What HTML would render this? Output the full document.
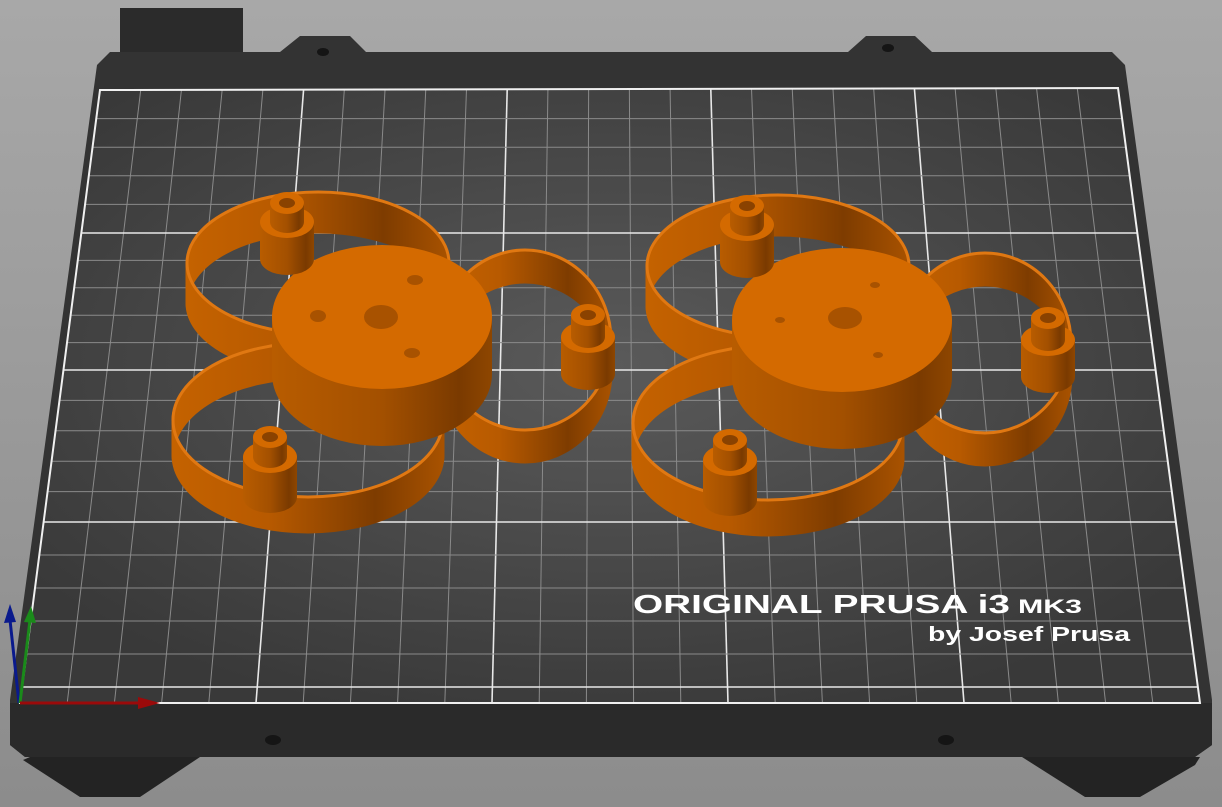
<!DOCTYPE html>
<html><head><meta charset="utf-8"><style>
html,body{margin:0;padding:0;width:1222px;height:807px;overflow:hidden;background:#999}
svg{display:block}
</style></head><body>
<svg id="s" width="1222" height="807" viewBox="0 0 1222 807" xmlns="http://www.w3.org/2000/svg">
<defs>
<linearGradient id="bg" x1="0" y1="0" x2="0" y2="1"><stop offset="0" stop-color="#a8a8a8"/><stop offset="1" stop-color="#8c8c8c"/></linearGradient>
<radialGradient id="gf" cx="0.5" cy="0.45" r="0.6"><stop offset="0" stop-color="#5a5a5a"/><stop offset="1" stop-color="#393939"/></radialGradient>
<linearGradient id="wall" x1="0" y1="0" x2="1" y2="0"><stop offset="0" stop-color="#c46200"/><stop offset="0.35" stop-color="#b85a00"/><stop offset="0.75" stop-color="#7e3c00"/><stop offset="1" stop-color="#a85200"/></linearGradient>
<linearGradient id="hubs" x1="0" y1="0" x2="1" y2="0"><stop offset="0" stop-color="#b85c00"/><stop offset="0.5" stop-color="#a35000"/><stop offset="0.85" stop-color="#7a3a00"/><stop offset="1" stop-color="#8e4600"/></linearGradient>
</defs>
<rect width="1222" height="807" fill="url(#bg)"/>
<rect x="120" y="8" width="123" height="50" fill="#2b2b2b"/>
<polygon points="30,757 200,757 140,797 80,797 23,760" fill="#232323"/>
<polygon points="1022,757 1200,757 1195,765 1140,797 1085,797" fill="#232323"/>
<polygon points="97,65 110,52 280,52 300,36 350,36 366,52 848,52 866,36 915,36 932,52 1112,52 1125,65 1212,700 1212,745 1195,757 25,757 10,745 10,700" fill="#333"/>
<polygon points="10,703 1212,703 1212,745 1195,757 25,757 10,745" fill="#2a2a2a"/>
<ellipse cx="273" cy="740" rx="8" ry="5" fill="#151515"/>
<ellipse cx="946" cy="740" rx="8" ry="5" fill="#151515"/>
<ellipse cx="323" cy="52" rx="6" ry="4" fill="#151515"/>
<ellipse cx="888" cy="48" rx="6" ry="4" fill="#151515"/>
<polygon points="100,90 1118,88 1200,703 20,703" fill="url(#gf)"/>
<g id="grid"></g>
<polygon points="100,90 1118,88 1200,703 20,703" fill="none" stroke="#f0f0f0" stroke-width="2"/>
<g id="obj1"></g>
<g id="obj2" transform="translate(460,3)"></g>
<text x="633" y="613" fill="#fff" font-family="Liberation Sans, sans-serif" font-size="26" font-weight="bold" textLength="377" lengthAdjust="spacingAndGlyphs">ORIGINAL PRUSA i3</text>
<text x="1018" y="613" fill="#fff" font-family="Liberation Sans, sans-serif" font-size="19" font-weight="bold" textLength="64" lengthAdjust="spacingAndGlyphs">MK3</text>
<text x="928" y="641" fill="#fff" font-family="Liberation Sans, sans-serif" font-size="20" font-weight="bold" textLength="202" lengthAdjust="spacingAndGlyphs">by Josef Prusa</text>
<line x1="19" y1="703" x2="10" y2="620" stroke="#0a1a8c" stroke-width="3"/>
<polygon points="4,623 10,604 16,622" fill="#0a1a8c"/>
<line x1="20" y1="703" x2="30" y2="620" stroke="#1a8a1a" stroke-width="3"/>
<polygon points="24,622 31,606 36,623" fill="#1a8a1a"/>
<line x1="20" y1="703" x2="140" y2="703" stroke="#9a0a0a" stroke-width="3"/>
<polygon points="138,697 160,703 138,709" fill="#9a0a0a"/>
</svg>
<script>
var NS="http://www.w3.org/2000/svg";
function el(p,n,a){var e=document.createElementNS(NS,n);for(var k in a)e.setAttribute(k,a[k]);p.appendChild(e);return e;}
var g=document.getElementById('grid');
var TL=[100,90],TR=[1118,88],BL=[20,703],BR=[1200,703];
for(var i=1;i<25;i++){var t=i/25;var x1=TL[0]+(TR[0]-TL[0])*t,y1=TL[1]+(TR[1]-TL[1])*t,x2=BL[0]+(BR[0]-BL[0])*t;
 el(g,'line',{x1:x1,y1:y1,x2:x2,y2:703,stroke:i%5?'#8a8a8a':'#e8e8e8','stroke-width':i%5?1:1.6});}
var maj=[90,233,370,522,687];var ys=[];
for(var m=0;m<4;m++)for(var k=0;k<5;k++)ys.push([maj[m]+(maj[m+1]-maj[m])*k/5,k==0]);
ys.push([687,true]);
ys.forEach(function(a,idx){if(idx==0)return;var y=a[0];var f=(y-90)/(703-90);var xl=100+(20-100)*f,xr=1118+(1200-1118)*f;
 el(g,'line',{x1:xl,y1:y,x2:xr,y2:y,stroke:a[1]?'#e8e8e8':'#8a8a8a','stroke-width':a[1]?1.6:1});});
function ring(p,cx,cy,rx,ry,h){for(var d=h;d>0;d-=2)el(p,'ellipse',{cx:cx,cy:cy+d,rx:rx,ry:ry,fill:'none',stroke:'url(#wall)','stroke-width':3});
 el(p,'ellipse',{cx:cx,cy:cy,rx:rx,ry:ry,fill:'none',stroke:'#e07812','stroke-width':3});}
function cyl(p,cx,cy,rx,ry,h,top){el(p,'rect',{x:cx-rx,y:cy,width:2*rx,height:h,fill:'url(#hubs)'});
 el(p,'ellipse',{cx:cx,cy:cy+h,rx:rx,ry:ry,fill:'url(#hubs)'});
 el(p,'ellipse',{cx:cx,cy:cy,rx:rx,ry:ry,fill:top||'#d46a00'});}
function boss(p,x,ybig,bot,ysmall){cyl(p,x,ybig,27,16,bot-ybig-16);cyl(p,x,ysmall,17,11,ybig-ysmall);
 el(p,'ellipse',{cx:x,cy:ysmall,rx:8,ry:5,fill:'#8a4200'});}
function obj(p,holes){
 ring(p,318,263,131,71,40);
 ring(p,525,340,86,90,32);
 ring(p,308,420,135,77,35);
 cyl(p,382,317,110,72,57);
 holes.forEach(function(h){el(p,'ellipse',{cx:h[0],cy:h[1],rx:h[2],ry:h[3],fill:'#a85200'});});
 boss(p,287,222,275,203);boss(p,588,337,390,315);boss(p,270,457,513,437);}
obj(document.getElementById('obj1'),[[381,317,17,12],[318,316,8,6],[415,280,8,5],[412,353,8,5]]);
obj(document.getElementById('obj2'),[[385,315,17,11],[320,317,5,3],[415,282,5,3],[418,352,5,3]]);
</script>
</body></html>
